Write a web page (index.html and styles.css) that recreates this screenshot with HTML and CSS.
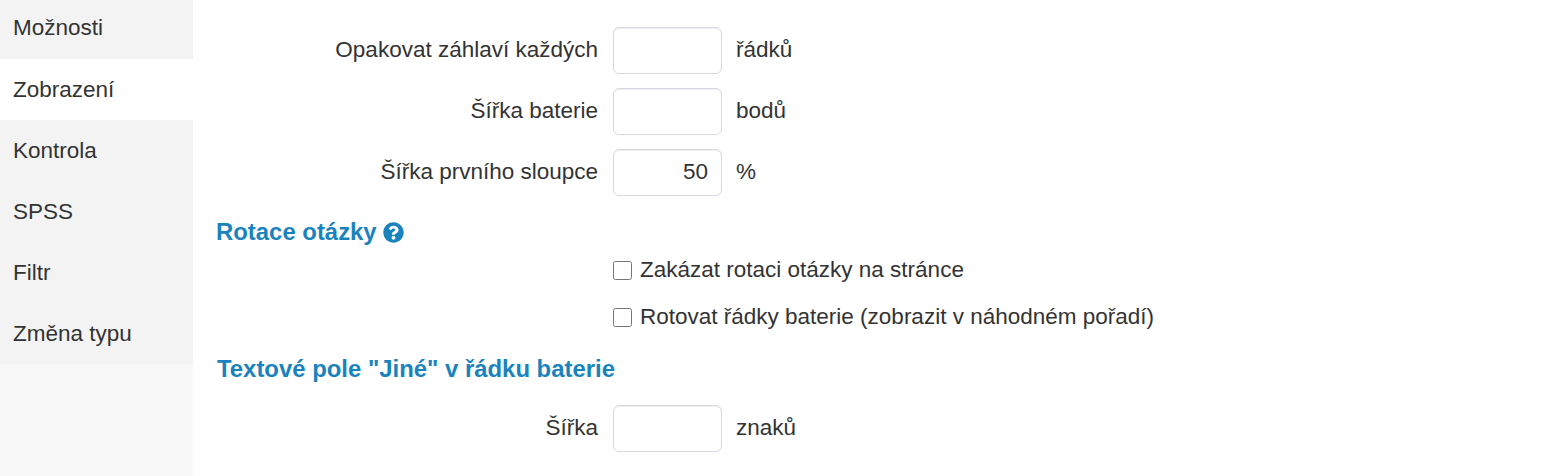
FILE: index.html
```html
<!DOCTYPE html>
<html lang="cs">
<head>
  <meta charset="UTF-8" />
  <title>Zobrazení</title>
  <link rel="stylesheet" href="styles.css">
</head>
<body>
  <div class="layout">
    <nav class="sidebar">
      <ul class="tabs">
        <li>Možnosti</li>
        <li class="active">Zobrazení</li>
        <li>Kontrola</li>
        <li>SPSS</li>
        <li>Filtr</li>
        <li>Změna typu</li>
      </ul>
    </nav>

    <main class="content">
      <div class="row">
        <label class="row-label">Opakovat záhlaví každých</label>
        <input class="num" type="text" />
        <span class="unit">řádků</span>
      </div>
      <div class="row">
        <label class="row-label">Šířka baterie</label>
        <input class="num" type="text" />
        <span class="unit">bodů</span>
      </div>
      <div class="row">
        <label class="row-label">Šířka prvního sloupce</label>
        <input class="num" type="text" value="50" />
        <span class="unit">%</span>
      </div>

      <h4 class="section-title">Rotace otázky
        <svg class="help" viewBox="0 0 512 512"><path fill="currentColor" d="M504 256c0 136.997-111.043 248-248 248S8 392.997 8 256C8 119.083 119.043 8 256 8s248 111.083 248 248zM262.655 90c-54.497 0-89.255 22.957-116.549 63.758-3.536 5.286-2.353 12.415 2.715 16.258l34.699 26.31c5.205 3.947 12.621 3.008 16.665-2.122 17.864-22.658 30.113-35.797 57.303-35.797 20.429 0 45.698 13.148 45.698 32.958 0 14.976-12.363 22.667-32.534 33.976C247.128 238.528 216 254.941 216 296v4c0 6.627 5.373 12 12 12h56c6.627 0 12-5.373 12-12v-1.333c0-28.462 83.186-29.647 83.186-106.667 0-58.002-60.165-102-116.531-102zM256 338c-25.365 0-46 20.635-46 46 0 25.364 20.635 46 46 46s46-20.636 46-46c0-25.365-20.635-46-46-46z"/></svg>
      </h4>
      <label class="check"><input type="checkbox" /> <span>Zakázat rotaci otázky na stránce</span></label>
      <label class="check"><input type="checkbox" /> <span>Rotovat řádky baterie (zobrazit v náhodném pořadí)</span></label>

      <h4 class="section-title second">Textové pole "Jiné" v řádku baterie</h4>
      <div class="row">
        <label class="row-label">Šířka</label>
        <input class="num" type="text" />
        <span class="unit">znaků</span>
      </div>
    </main>
  </div>
</body>
</html>
```

FILE: styles.css
```css
html, body {
  height: 100%;
}

body {
  margin: 0;
  font-family: "Liberation Sans", Arial, sans-serif;
  font-size: 22.5px;
  color: #333;
  background: #fff;
  overflow: hidden;
}

.layout {
  display: flex;
  height: 476px;
}

.sidebar {
  width: 193px;
  flex-shrink: 0;
  background: #f8f8f8;
}

.tabs {
  list-style: none;
  margin: 0;
  padding: 0;
  background: #f3f3f3;
}

.tabs li {
  height: 61px;
  line-height: 61px;
  padding-left: 13px;
}

.tabs li:first-child {
  height: 59px;
  line-height: 55px;
}

.tabs li.active {
  background: #fff;
}

.content {
  flex: 1;
  padding: 27px 0 0 23px;
}

.row {
  display: flex;
  align-items: center;
  height: 47px;
  margin-bottom: 14px;
}

.row-label {
  width: 382px;
  text-align: right;
  margin-right: 15px;
  padding-bottom: 2px;
}

.num {
  width: 109px;
  height: 47px;
  box-sizing: border-box;
  padding: 0 13px 1px;
  border: 1px solid #d5d9e0;
  border-radius: 6px;
  font: inherit;
  color: #333;
  text-align: right;
  box-shadow: inset 0 1px 1px rgba(0,0,0,0.075);
}

.unit {
  margin-left: 14px;
  padding-bottom: 2px;
}

.section-title {
  margin: 0;
  font-size: 23.9px;
  font-weight: bold;
  line-height: 30px;
  color: #1a83bd;
  display: flex;
  align-items: center;
  gap: 6px;
  padding-top: 7px;
}

.section-title.second {
  margin-top: 13px;
  padding: 0 0 0 1px;
  margin-bottom: 21px;
}

.help {
  width: 21px;
  height: 21px;
}

.check {
  display: flex;
  align-items: center;
  height: 47px;
  margin-left: 397px;
}

.check input {
  width: 19px;
  height: 19px;
  margin: 0 8px 0 0;
}

.check span {
  padding-bottom: 2px;
}
```
